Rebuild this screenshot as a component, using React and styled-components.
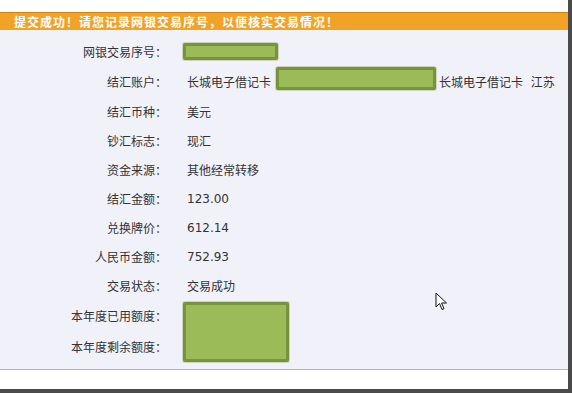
import styled, { createGlobalStyle } from 'styled-components';

const Global = createGlobalStyle`
  body {
    margin: 0;
    background: #fff;
    font-family: "DejaVu Sans", "Noto Sans CJK SC", sans-serif;
  }
`;

const rows = [
  { label: '网银交易序号：', box: { w: 95, h: 17, x: -4, y: 1 } },
  { label: '结汇账户：', value: '长城电子借记卡', box: { w: 160, h: 23, x: 5, y: -5 }, after: '长城电子借记卡  江苏' },
  { label: '结汇币种：', value: '美元' },
  { label: '钞汇标志：', value: '现汇' },
  { label: '资金来源：', value: '其他经常转移' },
  { label: '结汇金额：', value: '123.00' },
  { label: '兑换牌价：', value: '612.14' },
  { label: '人民币金额：', value: '752.93' },
  { label: '交易状态：', value: '交易成功' },
  { label: '本年度已用额度：' },
  { label: '本年度剩余额度：' },
];

const App = () => {
  return (
    <Frame>
      <Global />
      <Notice>提交成功！请您记录网银交易序号，以便核实交易情况！</Notice>
      <Panel>
        <Grid>
          {rows.map((r, i) => (
            <Row key={i}>
              <Label>{r.label}</Label>
              {i < 9 && (
                <Value>
                  {r.value && <span>{r.value}</span>}
                  {r.box && <Mask $w={r.box.w} $h={r.box.h} $x={r.box.x} $y={r.box.y} />}
                  {r.after && <After>{r.after}</After>}
                </Value>
              )}
            </Row>
          ))}
          <QuotaMask />
        </Grid>
        <Cursor width="13" height="20" viewBox="0 0 13 20">
          <path
            d="M1 1 L1 15 L4.5 11.5 L7 17.5 L9 16.6 L6.6 11 L11.5 11 Z"
            fill="#fff"
            stroke="#111"
            strokeWidth="1"
            strokeLinejoin="miter"
          />
        </Cursor>
      </Panel>
      <Footer />
    </Frame>
  );
};

export default App;

const Frame = styled.div`
  box-sizing: border-box;
  width: 572px;
  height: 393px;
  padding-top: 12px;
  border-right: 4px solid #4a4a4a;
  border-bottom: 4px solid #4a4a4a;
  display: flex;
  flex-direction: column;
`;

const Notice = styled.div`
  height: 17px;
  border-top: 1px solid #cf8511;
  background: #f2a227;
  color: #fff;
  font-family: "Noto Sans CJK SC", sans-serif;
  font-weight: bold;
  font-size: 12px;
  line-height: 17px;
  letter-spacing: 1px;
  padding-left: 14px;
`;

const Panel = styled.div`
  position: relative;
  background: #f1f1fa;
  border-bottom: 1px solid #b4b4b4;
  padding: 6px 0 7px;
`;

const Grid = styled.div`
  display: grid;
  grid-template-columns: 167px 1fr;
  grid-template-rows: 30px 30px 30px repeat(6, 29px) 31px 31px;
  column-gap: 20px;
`;

const Row = styled.div`
  display: contents;
`;

const Label = styled.div`
  grid-column: 1;
  text-align: right;
  align-self: center;
  font-family: "Noto Sans CJK SC", sans-serif;
  font-size: 12px;
  color: #333;
  white-space: nowrap;
`;

const Value = styled.div`
  grid-column: 2;
  display: flex;
  align-items: center;
  font-size: 12px;
  color: #333;
  white-space: pre;
  span {
    font-family: "DejaVu Sans", "Noto Sans CJK SC", sans-serif;
  }
`;

const Mask = styled.div`
  box-sizing: border-box;
  width: ${(p) => p.$w}px;
  height: ${(p) => p.$h}px;
  margin-left: ${(p) => p.$x}px;
  margin-top: ${(p) => p.$y}px;
  background: #9bbb59;
  border: 3px solid #77933c;
  border-radius: 2px;
  box-shadow: 0 0 0 1px rgba(119, 147, 60, 0.3);
`;

const After = styled.span`
  margin-left: 3px;
  font-family: "Noto Sans CJK SC", sans-serif;
`;

const QuotaMask = styled.div`
  grid-column: 2;
  grid-row: 10 / span 2;
  box-sizing: border-box;
  width: 106px;
  height: 60px;
  margin-top: 2px;
  margin-left: -4px;
  background: #9bbb59;
  border: 3px solid #77933c;
  border-radius: 2px;
  box-shadow: 0 0 0 1px rgba(119, 147, 60, 0.3);
`;

const Cursor = styled.svg`
  position: absolute;
  left: 435px;
  top: 262px;
`;

const Footer = styled.div`
  flex: 1;
  background: #fff;
`;
